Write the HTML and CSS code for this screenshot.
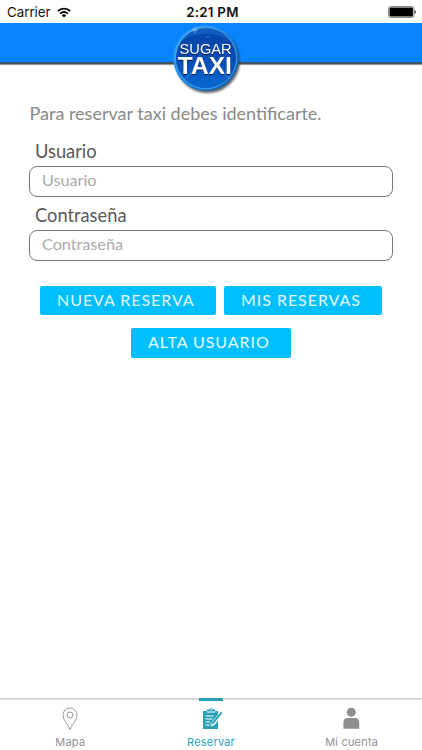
FILE: index.html
```html
<!DOCTYPE html>
<html lang="es">
<head>
<meta charset="utf-8">
<meta name="viewport" content="width=device-width, initial-scale=1">
<title>Sugar Taxi</title>
<link rel="stylesheet" href="styles.css">
</head>
<body>
<div class="app">
  <div class="status">
    <div class="carrier"><span>Carrier</span>
      <svg width="14" height="11" viewBox="0 0 14 11" fill="none" stroke="#000" stroke-width="1.9"><path d="M.8 4.2a8.8 8.8 0 0 1 12.4 0M3.1 6.6a5.5 5.5 0 0 1 7.8 0"/><path d="M7 10.6 4.9 8.4a3 3 0 0 1 4.2 0z" fill="#000" stroke="none"/></svg>
    </div>
    <div class="time">2:21 PM</div>
    <div class="power">
      <svg width="28" height="12" viewBox="0 0 28 12"><rect x=".5" y=".5" width="25.4" height="11" rx="2" fill="#fff" stroke="#888"/><rect x="1.5" y="1.4" width="23.4" height="9.2" rx="1" fill="#000"/><path d="M26.6 4v4c1.5-.7 1.5-3.3 0-4z" fill="#000"/></svg>
    </div>
  </div>
  <header class="header">
    <svg class="logo" width="72" height="74" viewBox="0 0 72 74">
      <defs>
        <linearGradient id="rim" x1="0" y1="0" x2="1" y2="1"><stop offset="0" stop-color="#43b2ff"/><stop offset=".45" stop-color="#1689e8"/><stop offset="1" stop-color="#07529c"/></linearGradient>
        <linearGradient id="disc" x1="0" y1="0" x2="0" y2="1"><stop offset="0" stop-color="#0846a8"/><stop offset=".5" stop-color="#074bb3"/><stop offset="1" stop-color="#086bd2"/></linearGradient>
        <filter id="soft" x="-20%" y="-20%" width="140%" height="140%"><feGaussianBlur stdDeviation=".8"/></filter>
      </defs>
      <circle cx="36.6" cy="37.6" r="32.5" fill="#3a3d43" opacity=".8" filter="url(#soft)"/>
      <circle cx="35" cy="35.3" r="32.7" fill="url(#rim)"/>
      <circle cx="35" cy="35.3" r="30.5" fill="url(#disc)" stroke="#62b4f3" stroke-width=".7"/>
      <path d="M10 19a30 30 0 0 1 50 0C48 8 22 8 10 19z" fill="#1769c8" opacity=".65"/>
      <path d="M11 59 26 44M35 14h4M49 48l10 8M32 48l4 4" stroke="#5cb8f4" stroke-width="1" opacity=".5"/>
      <path d="M24 4v6M21 7h6" stroke="#b3e2ff" stroke-width=".8" opacity=".8"/>
      <g class="logo-shade"><text class="sugar" x="8.6" y="30.6" textLength="52" lengthAdjust="spacingAndGlyphs">SUGAR</text><text class="taxi" x="6.800" y="50.8" textLength="54" lengthAdjust="spacingAndGlyphs">TAXI</text></g>
    </svg>
  </header>
  <main class="content">
    <p class="intro">Para reservar taxi debes identificarte.</p>
    <form>
      <label for="user">Usuario</label>
      <input id="user" type="text" placeholder="Usuario">
      <label for="pass">Contraseña</label>
      <input id="pass" type="password" placeholder="Contraseña">
      <div class="actions">
        <button class="new" type="button">NUEVA RESERVA</button>
        <button class="mine" type="button">MIS RESERVAS</button>
        <button class="signup" type="button">ALTA USUARIO</button>
      </div>
    </form>
  </main>
  <nav class="tabs">
    <a class="tab"><svg width="24" height="24" viewBox="0 0 24 24" fill="none" stroke="#999" stroke-width="1"><path d="M12 22.500C10.500 18 5 13.500 5 8a7 7 0 0 1 14 0c0 5.500-5.500 10-7 14.500z"/><circle cx="12" cy="8" r="3"/></svg><span>Mapa</span></a>
    <a class="tab active"><svg width="24" height="24" viewBox="0 0 24 24"><path d="M4 4h4V2.500h2.300a2 2 0 0 1 3.700 0h2V4h3v4.500l-6.500 7.500-.8 3.500 3.500-1.300 3.800-4.500V22H4z" fill="#2a9fb8"/><path d="M8 5h8M6.500 9h8M6.500 12h7M6.500 15h4.500M6.500 18h4" stroke="#fff" stroke-width="1"/><circle cx="12.100" cy="2.800" r=".8" fill="#fff"/><path d="m21.800 4.500 1.800 1.500L14.800 17l-2.900 1.400.8-3z" fill="#2a9fb8" stroke="#fff" stroke-width=".6"/></svg><span>Reservar</span></a>
    <a class="tab account"><svg width="24" height="24" viewBox="0 0 24 24" fill="#8e8e8e"><circle cx="11.300" cy="5.200" r="4.500"/><path d="M3.400 21.800v-5.300c0-4 1.500-5.500 4-5.500h7.800c2.500 0 4 1.500 4 5.500v5.300z"/></svg><span>Mi cuenta</span></a>
  </nav>
</div>
</body>
</html>
```
FILE: styles.css
```css
* { box-sizing: border-box; }
body { margin: 0; background: #fff; font-family: Lato, sans-serif; }
.app { height: 750px; display: flex; flex-direction: column; }

.status {
  height: 23px;
  display: grid;
  grid-template-columns: 1fr auto 1fr;
  align-items: center;
  padding: 1px 6px 0 7px;
  font: 13.3px/22px Inter, sans-serif;
  color: #111;
}
.carrier { display: flex; align-items: center; gap: 6px; }
.time { font-weight: 600; letter-spacing: .25px; padding-left: 2px; }
.power { display: flex; justify-content: flex-end; }

.header {
  height: 41px;
  flex: none;
  display: flex;
  justify-content: center;
  background: #0984ff;
  border-bottom: 2px solid #46515e;
  box-shadow: 0 1px 1px #999;
}
.logo { position: relative; left: -4px; flex: none; }
.logo text { font-family: "Liberation Sans", Arial, sans-serif; fill: #fff; }
.logo-shade { filter: drop-shadow(.8px 1px .4px #021c50); }
.logo .sugar { font-size: 15px; }
.logo .taxi { font-size: 24px; font-weight: bold; }

.content { flex: 1; padding: 37px 29px 0; }
.intro { margin: 0 0 0 .5px; font-size: 18px; line-height: 24px; color: #888; }
form { margin-top: 15px; }
label { display: block; padding-left: 6px; height: 26px; font-size: 18.3px; line-height: 23px; color: #585858; }
input {
  display: block;
  width: 364px;
  height: 31px;
  margin: 0 0 7px;
  padding: 0 12px 4px;
  border: 1px solid #777;
  border-radius: 8px;
  background: #fff;
  font: 16.2px/22px Lato, sans-serif;
}
input::placeholder { color: #aaa; opacity: 1; }
.actions { display: flex; flex-wrap: wrap; justify-content: center; gap: 13px 8px; padding-top: 17.5px; }
button {
  height: 29.5px;
  border: 0;
  border-radius: 2px;
  padding: 0 0 1px 17px;
  background: #00bfff;
  color: #e6faff;
  font: 16px/28px Lato, sans-serif;
  letter-spacing: .95px;
  text-align: left;
  white-space: nowrap;
}
.new { width: 176px; }
.mine { width: 158px; }
.signup { width: 160px; }

.tabs {
  height: 52px;
  flex: none;
  display: grid;
  grid-template-columns: repeat(3, 1fr);
  border-top: 2px solid #d9d9d9;
}
.tab {
  display: flex;
  flex-direction: column;
  align-items: center;
  padding-top: 7px;
  font: 11px/16px Inter, sans-serif;
  letter-spacing: .2px;
  color: #929292;
}
.tab span { margin-top: 3px; }
.active { color: #2a9fb8; }
.active::before { content: ""; width: 24px; height: 3px; margin: -9px 0 6px; background: #2a9fb8; }
```
